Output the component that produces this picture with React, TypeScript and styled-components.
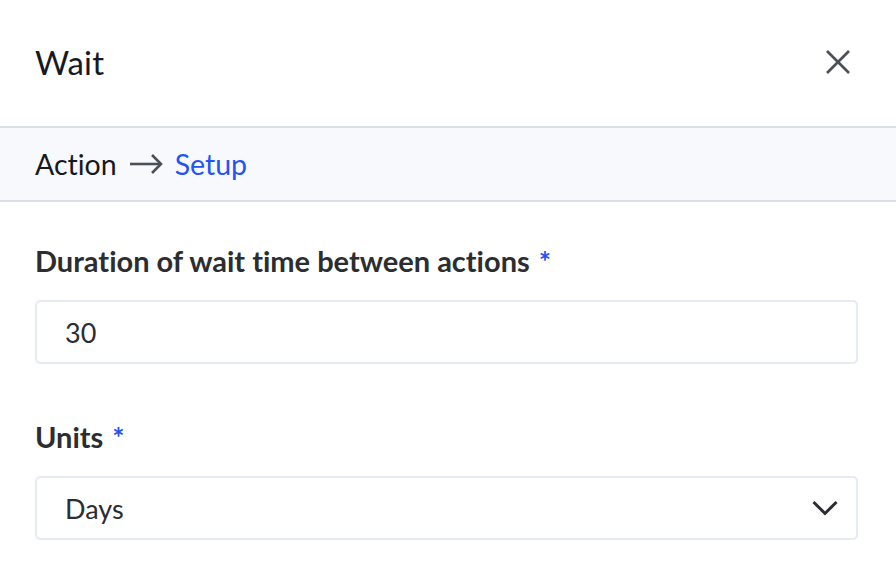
import { createGlobalStyle } from "styled-components"
import styled from "styled-components"

const GlobalStyle = createGlobalStyle`
	html, body {
		margin: 0;
		padding: 0;
		background: #ffffff;
	}
	body {
		font-family: "Lato", "Noto Sans", "Liberation Sans", sans-serif;
		-webkit-font-smoothing: antialiased;
	}
	* {
		box-sizing: border-box;
	}
`

const Panel = styled.div`
	width: 896px;
	height: 572px;
	background: #ffffff;
	display: flex;
	flex-direction: column;
	overflow: hidden;
`

const Header = styled.header`
	height: 128px;
	padding: 0 46px 2px 35px;
	display: flex;
	align-items: center;
	justify-content: space-between;
	border-bottom: 2px solid #d9dee7;
`

const Title = styled.h1`
	margin: 0;
	font-size: 33px;
	font-weight: 400;
	color: #16191f;
	letter-spacing: 0.2px;
	line-height: 40px;
`

const CloseButton = styled.button`
	width: 24px;
	height: 24px;
	padding: 0;
	border: none;
	background: transparent;
	display: flex;
	align-items: center;
	justify-content: center;
	color: #4b5058;
	cursor: pointer;
`

const Breadcrumb = styled.nav`
	height: 74px;
	padding: 0 35px;
	background: #f8f9fc;
	border-bottom: 2px solid #d9dee7;
	display: flex;
	align-items: center;
	gap: 12px;
	font-size: 28.5px;
`

const Crumb = styled.span<{ $active?: boolean }>`
	color: ${(p) => (p.$active ? "#2453f5" : "#16191f")};
	font-variant-ligatures: none;
`

const Form = styled.div`
	padding: 42px 38px 0 35px;
	display: flex;
	flex-direction: column;
	gap: 56px;
`

const Field = styled.div`
	display: flex;
	flex-direction: column;
	gap: 22px;
`

const Label = styled.label`
	font-size: 29px;
	line-height: 34px;
	font-weight: 700;
	color: #2b2d31;
	font-variant-ligatures: none;
`

const Required = styled.span`
	color: #2453f5;
	margin-left: 9px;
`

const Box = styled.div`
	height: 64px;
	border: 2px solid #e6eaf2;
	border-radius: 5px;
	padding: 0 18px 0 28px;
	display: flex;
	align-items: center;
	justify-content: space-between;
	font-size: 27px;
	color: #2b2d31;
	background: #ffffff;
`

function ArrowIcon() {
	return (
		<svg width="34" height="22" viewBox="0 0 34 22" fill="none" stroke="#4b5058" strokeWidth="2.6">
			<path d="M1 11H32" />
			<path d="M23 2L32 11L23 20" />
		</svg>
	)
}

function CloseIcon() {
	return (
		<svg width="24" height="24" viewBox="0 0 24 24" fill="none" stroke="currentColor" strokeWidth="2.6">
			<path d="M1 1L23 23" />
			<path d="M23 1L1 23" />
		</svg>
	)
}

function ChevronIcon() {
	return (
		<svg width="26" height="16" viewBox="0 0 26 16" fill="none" stroke="#2b2d31" strokeWidth="3">
			<path d="M1.5 2L13 13.5L24.5 2" />
		</svg>
	)
}

export default function App() {
	return (
		<>
			<GlobalStyle />
			<Panel>
				<Header>
					<Title>Wait</Title>
					<CloseButton aria-label="Close">
						<CloseIcon />
					</CloseButton>
				</Header>
				<Breadcrumb>
					<Crumb>Action</Crumb>
					<ArrowIcon />
					<Crumb $active>Setup</Crumb>
				</Breadcrumb>
				<Form>
					<Field>
						<Label>
							Duration of wait time between actions<Required>*</Required>
						</Label>
						<Box>30</Box>
					</Field>
					<Field>
						<Label>
							Units<Required>*</Required>
						</Label>
						<Box>
							Days
							<ChevronIcon />
						</Box>
					</Field>
				</Form>
			</Panel>
		</>
	)
}
